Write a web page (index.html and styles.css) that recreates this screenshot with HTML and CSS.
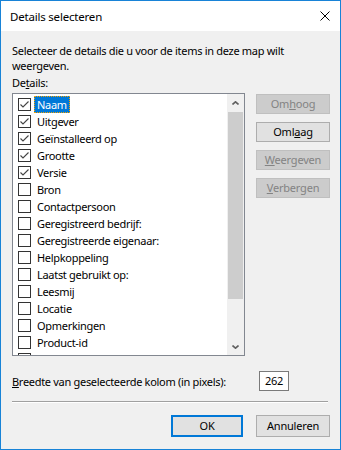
FILE: index.html
```html
<!DOCTYPE html>
<html lang="nl">
<head>
    <meta charset="UTF-8">
    <meta name="viewport" content="width=device-width, initial-scale=1.0">
    <title>Details selecteren</title>
    <link rel="stylesheet" href="styles.css">
</head>
<body>
<div class="window">
    <div class="titlebar">
        <span class="title">Details selecteren</span>
        <svg class="close" width="10" height="10" viewBox="0 0 10 10">
            <path d="M0.5 0.5 L9.5 9.5 M9.5 0.5 L0.5 9.5" stroke="#000" stroke-width="1" fill="none"/>
        </svg>
    </div>

    <div class="content">
        <p class="intro">Selecteer de details die u voor de items in deze map wilt<br>weergeven.</p>
        <div class="label">De<u>t</u>ails:</div>

        <div class="main">
            <div class="listbox">
                <ul class="items">
                    <li class="item"><span class="check on"></span><span class="name selected">Naam</span></li>
                    <li class="item"><span class="check on"></span><span class="name">Uitgever</span></li>
                    <li class="item"><span class="check on"></span><span class="name">Geïnstalleerd op</span></li>
                    <li class="item"><span class="check on"></span><span class="name">Grootte</span></li>
                    <li class="item"><span class="check on"></span><span class="name">Versie</span></li>
                    <li class="item"><span class="check"></span><span class="name">Bron</span></li>
                    <li class="item"><span class="check"></span><span class="name">Contactpersoon</span></li>
                    <li class="item"><span class="check"></span><span class="name">Geregistreerd bedrijf:</span></li>
                    <li class="item"><span class="check"></span><span class="name">Geregistreerde eigenaar:</span></li>
                    <li class="item"><span class="check"></span><span class="name">Helpkoppeling</span></li>
                    <li class="item"><span class="check"></span><span class="name">Laatst gebruikt op:</span></li>
                    <li class="item"><span class="check"></span><span class="name">Leesmij</span></li>
                    <li class="item"><span class="check"></span><span class="name">Locatie</span></li>
                    <li class="item"><span class="check"></span><span class="name">Opmerkingen</span></li>
                    <li class="item"><span class="check"></span><span class="name">Product-id</span></li>
                    <li class="item"><span class="check"></span></li>
                </ul>
                <div class="scrollbar">
                    <div class="arrow">
                        <svg width="7" height="4" viewBox="0 0 7 4"><path d="M0.5 3.5 L3.5 0.8 L6.5 3.5" stroke="#606060" stroke-width="1.6" fill="none"/></svg>
                    </div>
                    <div class="track"><div class="thumb"></div></div>
                    <div class="arrow">
                        <svg width="7" height="4" viewBox="0 0 7 4"><path d="M0.5 0.5 L3.5 3.2 L6.5 0.5" stroke="#606060" stroke-width="1.6" fill="none"/></svg>
                    </div>
                </div>
            </div>

            <div class="side-buttons">
                <button class="btn disabled">Om<u>h</u>oog</button>
                <button class="btn">Oml<u>a</u>ag</button>
                <button class="btn disabled"><u>W</u>eergeven</button>
                <button class="btn disabled"><u>V</u>erbergen</button>
            </div>
        </div>

        <div class="width-row">
            <span class="width-label"><u>B</u>reedte van geselecteerde kolom (in pixels):</span>
            <span class="width-input">262</span>
        </div>

        <div class="separator"></div>

        <div class="footer">
            <button class="btn default">OK</button>
            <button class="btn cancel">Annuleren</button>
        </div>
    </div>
</div>
</body>
</html>
```

FILE: styles.css
```css
* {
    box-sizing: border-box;
}
body {
    margin: 0;
    font-family: "Noto Sans", "Liberation Sans", sans-serif;
    font-size: 11px;
    letter-spacing: -0.3px;
    color: #000;
}
.window {
    width: 341px;
    height: 450px;
    border: 1px solid #1883d7;
    background-color: #f0f0f0;
    display: flex;
    flex-direction: column;
}
.titlebar {
    height: 30px;
    background-color: #fff;
    display: flex;
    align-items: center;
    justify-content: space-between;
    padding: 0 10px 0 9px;
}
.title {
    font-size: 11.5px;
    letter-spacing: -0.2px;
}
.close {
    display: block;
}
.content {
    padding: 12px 10px 0 11px;
}
.intro {
    margin: 0;
    line-height: 15px;
}
.label {
    line-height: 15px;
    margin-top: 2px;
    margin-bottom: 3px;
}
.main {
    display: flex;
    gap: 11px;
}
.listbox {
    width: 233px;
    height: 263px;
    border: 1px solid #828790;
    background-color: #fff;
    display: flex;
    overflow: hidden;
}
.items {
    list-style: none;
    margin: 0;
    padding: 2px 0 0 5px;
    flex: 1;
}
.item {
    height: 17px;
    display: flex;
    align-items: center;
    white-space: nowrap;
}
.check {
    width: 13px;
    height: 13px;
    border: 1px solid #333;
    background-color: #fff;
    margin-right: 3px;
    flex-shrink: 0;
}
.check.on {
    background-image: url("data:image/svg+xml,%3Csvg xmlns='http://www.w3.org/2000/svg' width='11' height='11' viewBox='0 0 11 11'%3E%3Cpath d='M1.5 5.5 L4 8 L9.5 2.5' stroke='%23444' stroke-width='1.1' fill='none'/%3E%3C/svg%3E");
    background-repeat: no-repeat;
}
.name {
    padding: 0 2px;
    height: 17px;
    line-height: 15px;
    border: 1px solid transparent;
}
.name.selected {
    background-color: #0078d7;
    color: #fff;
    border: 1px dotted #f5a300;
}
.scrollbar {
    width: 17px;
    background-color: #f0f0f0;
    display: flex;
    flex-direction: column;
}
.arrow {
    height: 17px;
    display: flex;
    align-items: center;
    justify-content: center;
}
.track {
    flex: 1;
    padding: 1px 1px 0;
}
.thumb {
    height: 187px;
    background-color: #cdcdcd;
}
.side-buttons {
    display: flex;
    flex-direction: column;
    gap: 8px;
    padding-top: 1px;
}
.btn {
    font-family: inherit;
    font-size: 11px;
    letter-spacing: -0.2px;
    width: 74px;
    height: 20px;
    padding: 0;
    background-color: #e1e1e1;
    border: 1px solid #adadad;
    color: #000;
    line-height: 16px;
}
.btn.disabled {
    background-color: #cccccc;
    border-color: #bfbfbf;
    color: #838383;
}
.width-row {
    display: flex;
    align-items: center;
    margin-top: 15px;
    height: 20px;
}
.width-label {
    width: 247px;
}
.width-input {
    width: 30px;
    height: 20px;
    border: 1px solid #7a7a7a;
    background-color: #fff;
    text-align: center;
    line-height: 17px;
}
.separator {
    width: 316px;
    height: 2px;
    margin-top: 10px;
    border-top: 1px solid #a0a0a0;
    border-bottom: 1px solid #fff;
}
.footer {
    display: flex;
    justify-content: flex-end;
    gap: 13px;
    margin-top: 12px;
}
.footer .btn {
    height: 22px;
}
.btn.default {
    width: 72px;
    border: 2px solid #0078d7;
}
```
